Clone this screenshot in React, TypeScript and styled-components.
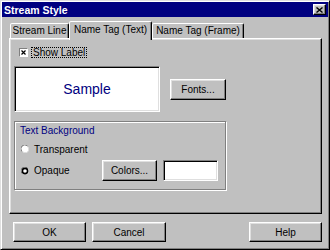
import styled, { createGlobalStyle, css } from 'styled-components';

const GlobalStyle = createGlobalStyle`
	html, body {
		margin: 0;
		padding: 0;
		background: #c0c0c0;
	}
	body {
		font-family: "Liberation Sans", Arial, sans-serif;
		font-size: 10px;
		color: #000;
	}
`;

const raised = css`
	border: 1px solid;
	border-color: #fff #000 #000 #fff;
	box-shadow: inset -1px -1px #808080, inset 1px 1px #dfdfdf;
`;

const sunken = css`
	border: 1px solid;
	border-color: #808080 #fff #fff #808080;
	box-shadow: inset 1px 1px #000, inset -1px -1px #dfdfdf;
`;

const Window = styled.div`
	width: 330px;
	height: 250px;
	box-sizing: border-box;
	padding: 1px;
	background: #c0c0c0;
	border: 1px solid;
	border-color: #dfdfdf #000 #000 #dfdfdf;
	box-shadow: inset 1px 1px #fff, inset -1px -1px #808080;
	display: flex;
	flex-direction: column;
`;

const TitleBar = styled.div`
	height: 15px;
	background: #000080;
	display: flex;
	align-items: center;
	justify-content: space-between;
	padding: 0 2px 0 2px;
`;

const Title = styled.span`
	color: #fff;
	font-weight: bold;
	font-size: 10.5px;
	letter-spacing: 0;
`;

const CloseButton = styled.div`
	width: 13px;
	height: 11px;
	box-sizing: border-box;
	background: #c0c0c0;
	${raised};
	display: flex;
	align-items: center;
	justify-content: center;
`;

const Body = styled.div`
	display: flex;
	flex-direction: column;
	padding: 4px 6px 0 7px;
`;

const TabRow = styled.div`
	display: flex;
	height: 17px;
	align-items: flex-start;
	padding-left: 1px;
`;

const Tab = styled.div<{ $active?: boolean; $width: number }>`
	width: ${(p) => p.$width}px;
	box-sizing: border-box;
	border: 1px solid;
	border-bottom: none;
	border-color: #fff #000 transparent #fff;
	border-radius: 2px 2px 0 0;
	box-shadow: inset -1px 0 #808080;
	background: #c0c0c0;
	text-align: center;
	white-space: nowrap;
	${(p) =>
		p.$active
			? css`
					height: 19px;
					padding-top: 2px;
					margin-bottom: -2px;
					position: relative;
					z-index: 1;
				`
			: css`
					height: 15px;
					margin-top: 2px;
					padding-top: 1px;
				`}
`;

const Panel = styled.div`
	height: 176px;
	box-sizing: border-box;
	${raised};
	padding: 8px 0 0 4px;
	display: flex;
	flex-direction: column;
`;

const CheckRow = styled.div`
	display: flex;
	align-items: center;
	height: 11px;
	margin-left: 5px;
	gap: 3px;
`;

const CheckBox = styled.div`
	width: 7px;
	height: 7px;
	background: #fff;
	border: 1px solid;
	border-color: #808080 #fff #fff #808080;
	display: flex;
	align-items: center;
	justify-content: center;
`;

const FocusLabel = styled.span`
	border: 1px dotted #000;
	padding: 0 1px;
	line-height: 9px;
`;

const SampleRow = styled.div`
	display: flex;
	align-items: center;
	margin-top: 8px;
`;

const SampleBox = styled.div`
	width: 146px;
	height: 46px;
	box-sizing: border-box;
	background: #fff;
	${sunken};
	display: flex;
	align-items: center;
	justify-content: center;
	color: #000080;
	font-size: 14px;
`;

const Button = styled.div<{ $width: number; $height?: number }>`
	width: ${(p) => p.$width}px;
	height: ${(p) => p.$height ?? 21}px;
	box-sizing: border-box;
	background: #c0c0c0;
	${raised};
	display: flex;
	align-items: center;
	justify-content: center;
	flex-shrink: 0;
`;

const GroupBox = styled.div`
	margin-top: 9px;
	width: 212px;
	height: 69px;
	box-sizing: border-box;
	border: 1px solid #808080;
	box-shadow: inset 1px 1px #fff, 1px 1px #fff;
	padding: 3px 6px 0 6px;
	display: flex;
	flex-direction: column;
`;

const GroupLabel = styled.div`
	color: #000080;
	line-height: 11px;
	margin-left: -1px;
`;

const OptionRow = styled.div<{ $gap: number }>`
	display: flex;
	align-items: center;
	margin-top: ${(p) => p.$gap}px;
	min-height: 12px;
`;

const Option = styled.div<{ $width?: number }>`
	display: flex;
	align-items: center;
	gap: 5px;
	width: ${(p) => (p.$width ? `${p.$width}px` : 'auto')};
`;

const Swatch = styled.div`
	width: 55px;
	height: 21px;
	box-sizing: border-box;
	margin-left: 6px;
	background: #fff;
	${sunken};
`;

const Footer = styled.div`
	display: flex;
	align-items: center;
	padding: 8px 6px 0 11px;
	gap: 6px;
`;

const Spacer = styled.div`
	flex: 1;
`;

function Radio(props: { checked?: boolean }) {
	return (
		<svg width="8" height="8" viewBox="0 0 8 8">
			<circle cx="4" cy="4" r="3.5" fill="#fff" />
			<path d="M1 6.5 A3.5 3.5 0 0 1 6.5 1" stroke="#808080" strokeWidth="1" fill="none" />
			<path d="M6.8 1.8 A3.5 3.5 0 0 1 1.8 6.8" stroke="#dfdfdf" strokeWidth="1" fill="none" />
			{props.checked && <circle cx="4" cy="4" r="2.6" fill="none" stroke="#000" strokeWidth="1.6" />}
		</svg>
	);
}

export default function App() {
	return (
		<>
			<GlobalStyle />
			<Window>
				<TitleBar>
					<Title>Stream Style</Title>
					<CloseButton>
						<svg width="7" height="6" viewBox="0 0 7 6">
							<path d="M0.5 0.5 L6.5 5.5 M6.5 0.5 L0.5 5.5" stroke="#000" strokeWidth="1.4" />
						</svg>
					</CloseButton>
				</TitleBar>
				<Body>
					<TabRow>
						<Tab $width={59}>Stream Line</Tab>
						<Tab $width={83} $active>Name Tag (Text)</Tab>
						<Tab $width={92}>Name Tag (Frame)</Tab>
					</TabRow>
					<Panel>
						<CheckRow>
							<CheckBox>
								<svg width="5" height="5" viewBox="0 0 5 5">
									<path d="M0.5 0.5 L4.5 4.5 M4.5 0.5 L0.5 4.5" stroke="#000" strokeWidth="1.2" />
								</svg>
							</CheckBox>
							<FocusLabel>Show Label</FocusLabel>
						</CheckRow>
						<SampleRow>
							<SampleBox>Sample</SampleBox>
							<Button $width={56} style={{ marginLeft: 10 }}>Fonts...</Button>
						</SampleRow>
						<GroupBox>
							<GroupLabel>Text Background</GroupLabel>
							<OptionRow $gap={7}>
								<Option>
									<Radio />
									<span>Transparent</span>
								</Option>
							</OptionRow>
							<OptionRow $gap={5}>
								<Option $width={81}>
									<Radio checked />
									<span>Opaque</span>
								</Option>
								<Button $width={55}>Colors...</Button>
								<Swatch />
							</OptionRow>
						</GroupBox>
					</Panel>
				</Body>
				<Footer>
					<Button $width={73} $height={20}>OK</Button>
					<Button $width={74} $height={20}>Cancel</Button>
					<Spacer />
					<Button $width={73} $height={20}>Help</Button>
				</Footer>
			</Window>
		</>
	);
}
